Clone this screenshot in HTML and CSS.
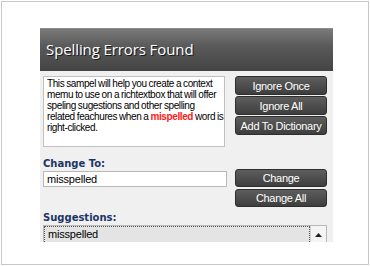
FILE: index.html
```html
<!DOCTYPE html>
<html lang="en">
<head>
    <meta charset="UTF-8">
    <title>Spelling Errors Found</title>
    <link rel="stylesheet" href="styles.css">
</head>
<body>
    <div class="frame">
        <div class="dialog">
            <div class="header">Spelling Errors Found</div>
            <div class="body">
                <div class="form">
                    <div class="textbox">
                        This sampel will help you create a context memu to use on a richtextbox that will offer speling sugestions and other spelling related feachures when a <span class="misspelled">mispelled</span> word is right-clicked.
                    </div>
                    <div class="btn-stack">
                        <button class="btn">Ignore Once</button>
                        <button class="btn">Ignore All</button>
                        <button class="btn">Add To Dictionary</button>
                    </div>

                    <div class="label change-label">Change To:</div>
                    <input class="change-input" type="text" value="misspelled">
                    <button class="btn btn-change">Change</button>
                    <button class="btn btn-change-all">Change All</button>

                    <div class="label suggest-label">Suggestions:</div>
                    <div class="listbox">
                        <div class="list-item">misspelled</div>
                        <div class="scroll-up">
                            <svg width="7" height="4" viewBox="0 0 7 4"><path d="M0 4 L3.5 0 L7 4 Z" fill="#222"/></svg>
                        </div>
                    </div>
                </div>
            </div>
        </div>
    </div>
</body>
</html>
```

FILE: styles.css
```css
html, body {
    margin: 0;
    padding: 0;
    background: #fff;
}

body {
    width: 370px;
    height: 266px;
    overflow: hidden;
    font-family: 'Liberation Sans', Arial, sans-serif;
}

.frame {
    margin: 1px;
    width: 368px;
    height: 264px;
    box-sizing: border-box;
    border: 1px solid #c8c8c8;
    padding: 26px 0 0 38px;
}

.dialog {
    width: 293px;
}

.header {
    height: 43px;
    box-sizing: border-box;
    padding: 10px 0 0 6px;
    background: linear-gradient(#7a7a7a 0%, #5a5a5a 40%, #444 100%);
    border-top: 1px solid #8a8a8a;
    color: #fff;
    font-family: 'Open Sans', 'Liberation Sans', sans-serif;
    font-size: 15px;
    letter-spacing: -0.1px;
    text-shadow: 1px 1px 0 #1a1a1a;
}

.body {
    height: 171px;
    overflow: hidden;
    background: #f0f0f0;
    padding: 5px 0 0 3px;
    box-sizing: border-box;
}

.form {
    display: grid;
    grid-template-columns: 182px 92px;
    column-gap: 10px;
}

.textbox {
    height: 71px;
    box-sizing: border-box;
    background: #fff;
    border: 1px solid #c0c0c0;
    padding: 1px 0 0 3px;
    font-size: 10px;
    line-height: 11px;
    color: #000;
    letter-spacing: -0.4px;
    word-spacing: -0.4px;
}

.misspelled {
    color: #ff1a1a;
    font-weight: bold;
}

.btn-stack {
    display: flex;
    flex-direction: column;
    gap: 1px;
}

.btn {
    height: 19px;
    padding: 0;
    background: linear-gradient(#5e5e5e, #3e3e3e);
    border: 1px solid #2e2e2e;
    border-radius: 3px;
    color: #fff;
    font-family: 'Liberation Sans', Arial, sans-serif;
    font-size: 11px;
    letter-spacing: -0.3px;
}

.label {
    font-family: 'DejaVu Sans', Verdana, sans-serif;
    font-weight: bold;
    font-size: 10px;
    line-height: 12px;
    color: #1c3565;
}

.change-label {
    grid-column: 1;
    margin-top: 11px;
}

.change-input {
    grid-column: 1;
    grid-row: 3;
    align-self: center;
    width: 184px;
    height: 16px;
    box-sizing: border-box;
    margin: 0;
    padding: 0 3px;
    border: 1px solid #b8b8b8;
    background: #fff;
    font-family: 'Liberation Sans', Arial, sans-serif;
    font-size: 11px;
    letter-spacing: -0.2px;
    color: #000;
}

.btn-change {
    grid-column: 2;
    grid-row: 3;
    height: 18px;
    margin-top: -1px;
}

.btn-change-all {
    grid-column: 2;
    grid-row: 4;
    height: 18px;
    margin-top: 2px;
}

.suggest-label {
    grid-column: 1 / 3;
    margin-top: 5px;
}

.listbox {
    grid-column: 1 / 3;
    margin-top: 1px;
    height: 18px;
    display: flex;
    background: #fff;
    border: 1px solid #b8b8b8;
    border-bottom: none;
}

.list-item {
    flex: 1;
    background: #e4e4e4;
    border: 1px dotted #555;
    padding: 0 3px;
    font-size: 11px;
    line-height: 14px;
    letter-spacing: -0.2px;
    color: #000;
}

.scroll-up {
    width: 15px;
    display: flex;
    align-items: center;
    justify-content: center;
    background: #f4f4f4;
    border-left: 1px solid #d0d0d0;
}
```
